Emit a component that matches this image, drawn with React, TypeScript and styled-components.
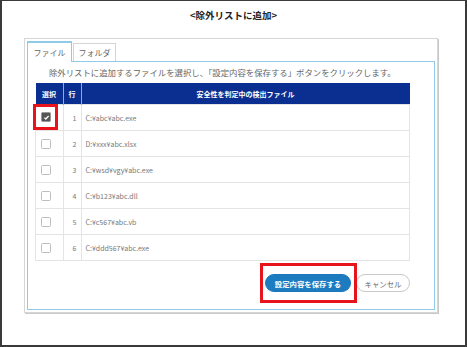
import React from 'react';
import styled, { createGlobalStyle } from 'styled-components';

const GlobalStyle = createGlobalStyle`
  html, body {
    margin: 0;
    padding: 0;
    background: #fff;
  }
  body {
    font-family: "Noto Sans CJK JP", "Noto Sans", sans-serif;
  }
`;

const Frame = styled.div`
  box-sizing: border-box;
  width: 467px;
  height: 347px;
  border: 2px solid #3a3a3a;
  border-top-width: 1px;
  background: #fff;
`;

const Title = styled.h1`
  margin: 0;
  padding-top: 7px;
  font-size: 9.5px;
  line-height: 14px;
  font-weight: 700;
  color: #222;
  text-align: center;
`;

const Panel = styled.div`
  box-sizing: border-box;
  display: flex;
  flex-direction: column;
  width: 414px;
  height: 275px;
  margin: 16px 0 0 22px;
  padding: 2px;
  border: 1px solid #d6d6d6;
  box-shadow: 1px 1px 0 #c9c9c9;
`;

const Tabs = styled.div`
  display: flex;
  align-items: flex-end;
  height: 20px;
`;

const Tab = styled.div<{ $active?: boolean }>`
  box-sizing: border-box;
  display: flex;
  align-items: center;
  justify-content: center;
  width: ${(p) => (p.$active ? '45px' : '43px')};
  height: ${(p) => (p.$active ? '21px' : '18px')};
  margin-left: ${(p) => (p.$active ? '0' : '1px')};
  margin-bottom: ${(p) => (p.$active ? '-1px' : '0')};
  border: 1px solid ${(p) => (p.$active ? '#8fcbe9' : '#d4d4d4')};
  border-top-width: ${(p) => (p.$active ? '2px' : '1px')};
  border-bottom: none;
  background: #fff;
  position: relative;
  z-index: 1;
  font-size: 8px;
  color: #666;
`;

const Content = styled.div`
  flex: 1;
  box-sizing: border-box;
  border: 1px solid #8fcbe9;
  padding: 4px 0 0 7px;
`;

const Lead = styled.div`
  padding-left: 14px;
  margin-bottom: 5px;
  font-size: 8.4px;
  line-height: 12px;
  color: #666;
  white-space: nowrap;
`;

const Table = styled.table`
  width: 375px;
  border-collapse: collapse;
  table-layout: fixed;
  font-size: 7px;
`;

const Th = styled.th<{ $w?: number }>`
  width: ${(p) => (p.$w ? `${p.$w}px` : 'auto')};
  height: 21px;
  padding: 0;
  background: #0b2f91;
  color: #fff;
  font-weight: 700;
  text-align: center;
  border-left: 1px solid #9aa6cc;
  &:first-child {
    border-left: none;
  }
`;

const Td = styled.td<{ $align?: string }>`
  height: 25px;
  padding: 0 4px;
  border: 1.5px solid #e4e4e4;
  color: #777;
  font-size: 7px;
  text-align: ${(p) => p.$align || 'left'};
  vertical-align: middle;
`;

const CheckCell = styled.td`
  height: 25px;
  padding: 0 0 0 5px;
  border: 1.5px solid #e4e4e4;
  vertical-align: middle;
`;

const Box = styled.span<{ $checked?: boolean }>`
  box-sizing: border-box;
  display: flex;
  align-items: center;
  justify-content: center;
  width: 10px;
  height: 10px;
  border: 1px solid ${(p) => (p.$checked ? '#999' : '#bdbdbd')};
  border-radius: 1.5px;
  background: ${(p) => (p.$checked ? '#555' : '#fff')};
`;

const Marked = styled.span<{ $t: number; $r: number; $b: number; $l: number }>`
  position: relative;
  display: inline-flex;
  &::after {
    content: '';
    position: absolute;
    top: -${(p) => p.$t}px;
    right: -${(p) => p.$r}px;
    bottom: -${(p) => p.$b}px;
    left: -${(p) => p.$l}px;
    border: 3px solid #e8141c;
    pointer-events: none;
  }
`;

const Actions = styled.div`
  display: flex;
  justify-content: flex-end;
  gap: 5px;
  width: 375px;
  margin-top: 13px;
`;

const Button = styled.button<{ $primary?: boolean }>`
  box-sizing: border-box;
  height: 18px;
  width: ${(p) => (p.$primary ? '86px' : '54px')};
  padding: 0;
  border-radius: 9px;
  border: 1px solid ${(p) => (p.$primary ? '#1b78bd' : '#c8c8c8')};
  background: ${(p) => (p.$primary ? '#1d7bbf' : '#fff')};
  color: ${(p) => (p.$primary ? '#fff' : '#666')};
  font-family: inherit;
  font-size: 7.4px;
  font-weight: ${(p) => (p.$primary ? 700 : 400)};
  cursor: pointer;
`;

const files = [
  'C:¥abc¥abc.exe',
  'D:¥xxx¥abc.xlsx',
  'C:¥wsd¥vgy¥abc.exe',
  'C:¥b123¥abc.dll',
  'C:¥c567¥abc.vb',
  'C:¥ddd567¥abc.exe',
];

const Check = () => (
  <svg width="7" height="7" viewBox="0 0 10 10">
    <path d="M2 5.2l2 2L8 2.8" fill="none" stroke="#fff" strokeWidth="1.8" />
  </svg>
);

const App = () => (
  <>
    <GlobalStyle />
    <Frame>
      <Title>&lt;除外リストに追加&gt;</Title>
      <Panel>
        <Tabs>
          <Tab $active>ファイル</Tab>
          <Tab>フォルダ</Tab>
        </Tabs>
        <Content>
          <Lead>除外リストに追加するファイルを選択し、「設定内容を保存する」ボタンをクリックします。</Lead>
          <Table>
            <thead>
              <tr>
                <Th $w={27}>選択</Th>
                <Th $w={17}>行</Th>
                <Th>安全性を判定中の検出ファイル</Th>
              </tr>
            </thead>
            <tbody>
              {files.map((f, i) => (
                <tr key={f}>
                  <CheckCell>
                    {i === 0 ? (
                      <Marked $t={8} $r={7} $b={8} $l={8}>
                        <Box $checked>
                          <Check />
                        </Box>
                      </Marked>
                    ) : (
                      <Box />
                    )}
                  </CheckCell>
                  <Td $align="right">{i + 1}</Td>
                  <Td>{f}</Td>
                </tr>
              ))}
            </tbody>
          </Table>
          <Actions>
            <Marked $t={11} $r={6} $b={11} $l={5}>
              <Button $primary>設定内容を保存する</Button>
            </Marked>
            <Button>キャンセル</Button>
          </Actions>
        </Content>
      </Panel>
    </Frame>
  </>
);

export default App;
